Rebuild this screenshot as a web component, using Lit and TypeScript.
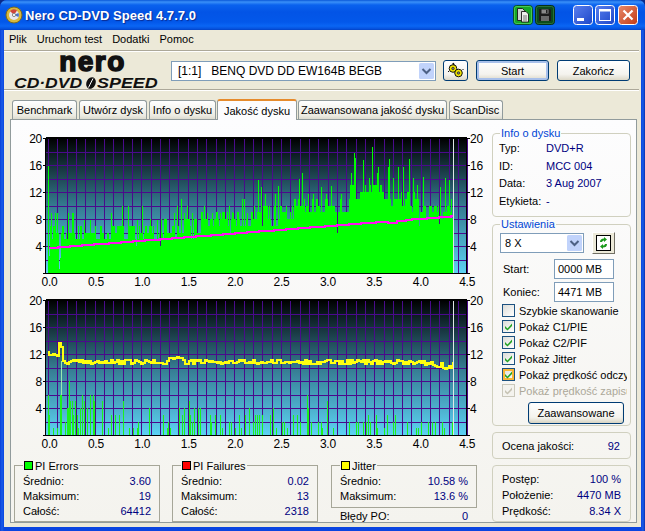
import { LitElement, html, css, svg } from "lit";
import { customElement, property } from "lit/decorators.js";

function rng(seed: number) {
  let s = seed;
  return () => {
    s = (s * 1664525 + 1013904223) % 4294967296;
    return s / 4294967296;
  };
}

const PL = 37, PW = 420, PT = 10, PB = 145;
const U = 6.75;
const yOf = (v: number) => PB - v * U;

const PEAKS_A: [number, number][] = [
  [115,124],[118,183],[122,264],[135,264],[142,264],[160,305],[175,264],[185,264],[190,264],[205,305],[222,283],[240,283],
  [303,262],[312,305],[336,243],[355,243],[380,283],[396,243],[420,305],[440,283],[462,283],[492,262],[502,243],[512,222],
  [522,262],[532,243],[545,262],[583,243],[592,264],[605,264],[630,264],[658,243],[670,264],[695,222],[703,222],[712,262],
];
const PEAKS_B: [number, number][] = [
  [25,165],[33,185],[45,205],[75,205],[85,182],[148,162],[155,145],[175,205],[190,205],[213,185],[228,205],[243,182],
  [272,205],[303,145],[313,85],[315,100],[340,105],[358,160],[367,65],[380,145],[385,125],[413,125],[416,103],[428,160],
  [445,125],[459,125],[478,103],[490,160],[500,180],[520,155],[570,185],[585,160],[597,165],
];

function piePath() {
  const r = rng(7);
  const heights: number[] = [];
  const end = 442;
  let cur = 6;
  for (let x = 37; x <= end; x++) {
    const zr = (x - 239) * 3;
    let b: number;
    if (x < 130) b = 6;
    else if (x < 190) b = 6.8;
    else if (x < 239) b = 8;
    else if (zr < 130) b = 9;
    else if (zr < 280) b = 10;
    else if (zr < 300) b = 11.5;
    else if (zr < 420) b = 12.4;
    else if (zr < 500) b = 11;
    else b = 9.6;
    if (r() < 0.55) cur = Math.round(b + (r() - 0.55) * 3);
    heights.push(cur);
  }
  const set = (x: number, v: number) => {
    const i = Math.round(x) - 37;
    if (i >= 0 && i < heights.length) heights[i] = Math.max(heights[i], v);
  };
  for (const [zx, zy] of PEAKS_A) set(zx / 3 - 1, (443 - zy) / 20.2);
  for (const [zx, zy] of PEAKS_B) set(zx / 3 + 239, (443 - zy) / 20.2);
  const dips: [number, number][] = [[48, 0.6], [49, 2.2], [38, 2.6], [149, 4], [326, 6], [408, 7], [428, 7.2]];
  for (const [x, v] of dips) heights[x - 37] = v;
  return heights.map((v, i) => `M${37 + i + 0.5} ${PB}V${yOf(v).toFixed(1)}`).join("");
}

function pinkLine() {
  const r = rng(21);
  let d = "";
  let last = 0;
  for (let x = 38; x <= 441; x += 3) {
    const t = (x - 38) / 403;
    let v = 3.7 + t * 4.7;
    if (x > 375 && x < 395) v += (r() - 0.5) * 0.9;
    const y = Math.round(yOf(v));
    d += d ? `H${x}V${y}` : `M${x} ${y}`;
    last = y;
  }
  return d + `H442V${last}`;
}

const BARS_A: [number, number][] = [
  [115,6],[118,3],[130,1],[140,1],[150,6],[153,6],[165,2],[170,4],[173,4],[178,8],[180,5],[185,5],[188,3],[195,5],[200,3],[205,1],
  [210,4],[215,6],[222,5],[232,4],[240,6],[248,6],[252,5],[277,5],[293,1],[302,3],[316,3],[327,3],[338,5],[340,5],[356,1],[370,1],
  [380,1],[385,2],[418,4],[460,3],[470,1],[474,2],[480,1],[506,4],[515,3],[523,4],[538,5],[540,3],[545,2],[553,4],[563,4],[571,4],
  [600,3],[604,2],[615,3],[630,3],[637,1],[656,2],[664,2],[676,1],[688,3],[692,1],[704,3],[716,4],
];
const BARS_B: [number, number][] = [
  [8,2],[15,3],[22,3],[26,3],[37,3],[60,3],[70,4],[77,1],[97,2],[103,2],[110,1],[130,3],[140,3],[150,2],[172,6],[175,4],[182,2],
  [203,2],[212,2],[215,1],[230,5],[232,3],[250,1],[298,2],[318,2],[323,2],[340,2],[347,2],[355,3],[360,2],[378,3],[382,1],[402,1],
  [410,3],[428,2],[436,3],[472,2],[497,1],[505,1],[513,2],[535,2],[547,2],[555,2],[577,2],[583,1],[605,2],
];

function pifPath() {
  let d = "";
  for (const [zx, v] of BARS_A) d += `M${Math.round(zx / 3 - 1) + 0.5} ${PB}V${yOf(v)}`;
  for (const [zx, v] of BARS_B) d += `M${Math.round(zx / 3 + 239) + 0.5} ${PB}V${yOf(v)}`;
  return d;
}

function jitterPath() {
  const r = rng(99);
  let d = `M37 ${Math.round(yOf(12.3))}`;
  for (let x = 38; x <= 442; x += 2) {
    const u = x - 37;
    let v = 10.8 + (r() - 0.5) * 0.7;
    if (u < 8) v = 12 + (r() - 0.5) * 0.5;
    else if (u < 11) v = 11.7;
    else if (u < 13) v = 13.7;
    else if (u < 15) v = 13;
    else if (u < 17) v = 11;
    else if (u > 120 && u < 135) v += 0.6;
    else if (u > 375) v = 10.3 + (r() - 0.5) * 1.0;
    d += `H${x}V${Math.round(yOf(v))}`;
  }
  return d;
}

@customElement("nero-chart")
class NeroChart extends LitElement {
  @property() mode = "pie";
  static styles = css`
    :host { display: block; width: 478px; height: 162px; }
    svg { display: block; }
    text { font: 12px "Liberation Sans", Arial, sans-serif; fill: #000; letter-spacing: -0.25px; }
    .c { text-anchor: middle; }
    .e { text-anchor: end; }
    .grid { stroke: #4a0a8c; stroke-width: 1; shape-rendering: crispEdges; fill: none; }
    .frame { stroke: #000; stroke-width: 1; shape-rendering: crispEdges; fill: none; }
    .top { stroke: #000; stroke-width: 2; shape-rendering: crispEdges; }
    .green { stroke: #00ff00; stroke-width: 1; fill: none; shape-rendering: crispEdges; }
    .pif { stroke: #1cf01c; stroke-width: 1.4; fill: none; shape-rendering: crispEdges; }
    .pale { stroke: #9ae8b0; stroke-width: 1; shape-rendering: crispEdges; }
    .pink { stroke: #ff10f0; stroke-width: 2; fill: none; shape-rendering: crispEdges; }
    .yellow { stroke: #ffff10; stroke-width: 2; fill: none; shape-rendering: crispEdges; }
    .mark { stroke: #dfe6e6; stroke-width: 1; shape-rendering: crispEdges; }
  `;
  render() {
    const ys = [0, 2, 4, 6, 8, 10, 12, 14, 16, 18, 20];
    const xs = Array.from({ length: 46 }, (_, k) => k);
    const labels = [20, 16, 12, 8, 4];
    const xl = ["0.0", "0.5", "1.0", "1.5", "2.0", "2.5", "3.0", "3.5", "4.0", "4.5"];
    const pie = this.mode === "pie";
    return html`<svg width="478" height="162" viewBox="0 0 478 162">
      <defs>
        <linearGradient id="bg" x1="0" y1="0" x2="0" y2="1">
          <stop offset="0" stop-color="#000000"></stop>
          <stop offset="0.5" stop-color="#357a90"></stop>
          <stop offset="1" stop-color="#5cd2f4"></stop>
        </linearGradient>
      </defs>
      <rect x=${PL - 2} y=${PT} width=${PW} height=${PB - PT} fill="url(#bg)"></rect>
      ${ys.map((v) => svg`<path class="grid" d="M${PL - 2} ${Math.round(yOf(v)) + 0.5}H${PL - 2 + PW}"></path>`)}
      ${xs.map((k) => svg`<path class="grid" d="M${Math.round(PL + k * 9.32) + 0.5} ${PT}V${PB}"></path>`)}
      ${pie
        ? svg`<path class="green" d=${piePath()}></path><path class="pink" d=${pinkLine()}></path>`
        : svg`<path class="pale" d="M50.5 ${PB}V${yOf(11)}"></path><path class="pif" d=${pifPath()}></path><path class="yellow" d=${jitterPath()}></path>`}
      <path class="mark" d="M442.5 ${PT}V${PB}"></path>
      <path class="top" d="M${PL - 2} ${PT}H${PL - 2 + PW + 1}"></path>
      <path class="frame" d="M${PL - 2.5} ${PT}V${PB + 0.5}H${PL - 2 + PW}V${PT}"></path>
      ${ys.filter((v) => v % 4 === 0).map((v) => svg`<path class="frame" d="M${PL - 5} ${Math.round(yOf(v)) + 0.5}H${PL - 2}M${PL - 2 + PW} ${Math.round(yOf(v)) + 0.5}h4"></path>`)}
      ${labels.map((v) => svg`<text class="e" x="31" y=${yOf(v) + 4.5}>${v}</text>`)}
      ${labels.map((v) => svg`<text x="459" y=${yOf(v) + 4.5}>${v}</text>`)}
      ${xl.map((t, i) => svg`<text class="c" x=${38.5 + i * 46.4} y="158">${t}</text>`)}
    </svg>`;
  }
}

@customElement("stat-box")
class StatBox extends LitElement {
  @property() label = "";
  @property() tone = "green";
  @property({ type: Array }) rows: [string, string][] = [];
  @property({ type: Boolean }) short = false;
  static styles = css`
    :host { display: block; width: 146px; }
    fieldset {
      margin: 0; padding: 2px 8px 0 8px; min-width: 0; box-sizing: border-box;
      border: 1px solid #a6a698; height: 63px;
      display: flex; flex-direction: column;
    }
    :host([short]) fieldset { height: 49px; }
    legend { display: flex; align-items: center; gap: 2px; padding: 0 1px; margin-left: 0; height: 13px; font-size: 11px; color: #000; }
    .sw { width: 7px; height: 7px; border: 1px solid #000; }
    .green { background: #00ff00; }
    .red { background: #ff0000; }
    .yellow { background: #ffff00; }
    .row { display: flex; justify-content: space-between; height: 15px; line-height: 15px; font-size: 11px; }
    .v { color: #000080; }
  `;
  render() {
    return html`<fieldset>
      <legend><span class="sw ${this.tone}"></span>${this.label}</legend>
      ${this.rows.map((r) => html`<div class="row"><span>${r[0]}</span><span class="v">${r[1]}</span></div>`)}
    </fieldset>`;
  }
}

@customElement("app-root")
class AppRoot extends LitElement {
  static styles = css`
    :host { display: block; width: 645px; height: 531px; background: #0a2a8a; font: 11px "Liberation Sans", Arial, sans-serif; color: #000; overflow: hidden; }
    .window { height: 531px; display: flex; flex-direction: column; box-sizing: border-box; border-radius: 7px 7px 0 0; overflow: hidden;
      background: linear-gradient(90deg, #0a3fd8 0, #1a5ce8 2px, #0a45e0 4px, #0a45e0 641px, #1a5ce8 643px, #0a2fb0 645px); }
    .title { height: 30px; flex: none; display: flex; align-items: center; padding: 0 7px 0 5px;
      background: linear-gradient(180deg, #0a58d8 0, #3a90f8 2px, #0a62ee 5px, #0354e6 12px, #0358ea 22px, #0a66f4 26px, #0550dc 29px, #0340c0 30px); }
    .app-ic { width: 18px; height: 18px; flex: none; margin-right: 2px; }
    .title-text { font: bold 13px "Liberation Sans", Arial, sans-serif; letter-spacing: 0.05px; color: #fff; text-shadow: 1px 1px 1px #0a2a90; flex: 1; white-space: nowrap; }
    .tb { width: 20px; height: 20px; flex: none; display: block; }
    .ml2 { margin-left: 2px; }
    .ml3 { margin-left: 3px; }
    .tb-gap { width: 18px; flex: none; }
    .body { flex: 1; margin: 0 4px 4px; background: #ece9d8; display: flex; flex-direction: column; min-height: 0; }
    .menu { height: 18px; padding-bottom: 2px; flex: none; display: flex; align-items: center; padding-left: 5px; gap: 10px; }
    .rule { height: 2px; flex: none; margin: 0 2px 0 0; background: linear-gradient(180deg, #aca899 50%, #ffffff 50%); }
    .head { height: 37px; flex: none; display: flex; align-items: center; padding-left: 10px; }
    .logo { width: 157px; height: 37px; flex: none; display: flex; flex-direction: column; align-items: center; line-height: 1; }
    .nero { font: bold 28px/16px "Liberation Sans", Arial, sans-serif; -webkit-text-stroke: 1.6px #111; letter-spacing: 1.5px; color: #111; height: 24px; padding-top: 2px; box-sizing: border-box; }
    .speed { display: flex; align-items: center; align-self: flex-start; font: italic bold 14px/12px "Liberation Sans", Arial, sans-serif; color: #111; white-space: nowrap; margin-top: 1px; }
    .speed span { display: inline-block; transform-origin: left center; }
    .speed .a { width: 71px; transform: scaleX(1.25); }
    .speed .b { width: 61px; transform: scaleX(1.28); }
    .disc { width: 12px; height: 12px; flex: none; }
    .combo { box-sizing: border-box; border: 1px solid #7f9db9; background: #fff; display: flex; align-items: center; justify-content: space-between; padding-left: 5px; white-space: nowrap; }
    .drive { width: 265px; height: 20px; margin: 0 7px 0 0; padding-left: 6px; font-size: 12px; }
    .drive b { font-weight: normal; margin-right: 10px; }
    .arrow { width: 15px; height: 16px; margin-right: 1px; flex: none; display: block; }
    .xpbtn { box-sizing: border-box; border: 1px solid #003c74; border-radius: 3px; background: linear-gradient(180deg, #ffffff 0, #f4f3ee 70%, #dcd8c8 100%); display: flex; align-items: center; justify-content: center; font: inherit; padding: 0; color: #000; }
    .key { width: 25px; height: 21px; margin-right: 8px; }
    .start { width: 73px; height: 21px; margin-right: 8px; box-shadow: inset 0 0 0 2px #a8c0ea; }
    .stop { width: 73px; height: 21px; }
    .tabs { flex: none; height: 19px; margin-top: 9px; display: flex; align-items: flex-end; padding-left: 8px; gap: 2px; position: relative; z-index: 1; }
    .tab { box-sizing: border-box; height: 19px; border: 1px solid #919b9c; border-bottom: none; border-radius: 3px 3px 0 0; background: linear-gradient(180deg, #fff, #ecebe2 80%, #dcdbcf); display: flex; align-items: center; justify-content: center; white-space: nowrap; }
    .tab.on { height: 21px; background: #fcfcfe; border-top: 2px solid #e68b2c; margin-bottom: -1px; }
    .t1 { width: 65px; } .t2 { width: 68px; } .t3 { width: 67px; } .t4 { width: 80px; margin-left: -1px; } .t5 { width: 149px; margin-left: -1px; } .t6 { width: 54px; }
    .panel { flex: none; height: 404px; margin: 0 4px 0 6px; box-sizing: border-box; border: 1px solid #919b9c; background: linear-gradient(180deg, #fdfdfe 0, #f4f3ee 100%); display: flex; }
    .left { width: 480px; flex: none; padding-top: 8px; box-sizing: border-box; }
    .stats { display: flex; margin: 7px 0 0 3px; gap: 12px; }
    .jit { width: 146px; margin-left: 1px; }
    .po { display: flex; justify-content: space-between; height: 15px; line-height: 15px; margin: 1px 9px 0 9px; }
    .v { color: #000080; }
    .right { width: 139px; flex: none; margin-left: 1px; display: flex; flex-direction: column; }
    fieldset.g { margin: 0; padding: 0 7px; min-width: 0; border: 1px solid #d0d0bf; border-radius: 4px; box-sizing: border-box; }
    fieldset.g legend { padding: 0 1px; margin-left: 0; color: #0046d5; height: 13px; line-height: 13px; }
    fieldset.info { height: 90px; margin-top: 7px; }
    .ir { display: flex; height: 17.7px; line-height: 17.7px; margin-left: -1px; }
    .ir span:first-child { width: 47px; flex: none; }
    fieldset.set { height: 209px; margin-top: 1px; padding-top: 1px; }
    .sr { display: flex; align-items: center; gap: 8px; }
    .speed-combo { width: 84px; height: 20px; padding-left: 4px; }
    .refresh { width: 23px; height: 22px; background: #ece9d8; border: 1px solid; border-color: #fff #716f64 #716f64 #fff; box-sizing: border-box; display: flex; align-items: center; justify-content: center; }
    .fr { display: flex; align-items: center; justify-content: space-between; height: 20px; margin: 0 9px 0 3px; }
    .fr.f1 { margin-top: 5px; }
    .fr.f2 { margin-top: 3px; margin-bottom: 1px; }
    .inp { box-sizing: border-box; width: 60px; height: 20px; border: 1px solid #7f9db9; background: #fff; padding-left: 3px; line-height: 18px; }
    .cb { display: flex; align-items: center; gap: 4px; height: 16px; white-space: nowrap; overflow: hidden; width: 125px; margin-left: 2px; }
    .box { width: 11px; height: 11px; flex: none; border: 1px solid #1c5180; background: linear-gradient(135deg, #dcdcd7, #fff); display: flex; align-items: center; justify-content: center; }
    .box svg { display: block; }
    .box.hot { box-shadow: inset 0 0 0 2px #f8b636; }
    .box.off { border-color: #cac8bb; background: #f4f3ee; }
    .dis { color: #aca899; }
    .adv { width: 96px; height: 22px; margin: 3px 0 0 28px; box-shadow: inset 0 -1px 2px #d8d4c4; }
    .rate { height: 27px; margin-top: 6px; display: flex; align-items: center; justify-content: space-between; padding: 0 10px 0 9px; border: 1px solid #d0d0bf; border-radius: 4px; box-sizing: border-box; }
    .prog { height: 57px; margin-top: 6px; padding: 5px 9px 0 9px; border: 1px solid #d0d0bf; border-radius: 4px; box-sizing: border-box; }
    .pr { display: flex; justify-content: space-between; height: 16px; line-height: 16px; }
  `;
  check(state: string) {
    const col = state === "off" ? "#c5c2b2" : "#21a121";
    return html`<svg width="9" height="9" viewBox="0 0 9 9"><path d="M1 4l2.5 2.5L8 1.500v2.400L3.500 8.600 1 6.200z" fill=${col}></path></svg>`;
  }
  render() {
    const arrow = html`<svg class="arrow" viewBox="0 0 15 16"><rect width="15" height="16" rx="1.500" fill="#c1d3fb"></rect><path d="M3.500 6l4 4 4-4" fill="none" stroke="#4d6185" stroke-width="2"></path></svg>`;
    return html`<div class="window">
      <div class="title">
        <svg class="app-ic" viewBox="0 0 18 18"><circle cx="9" cy="9" r="8" fill="#d8b83c" stroke="#7a6a20"></circle><circle cx="9" cy="9" r="5" fill="#e8e8f0"></circle><path d="M9 9L5 5a5.600 5.600 0 0 1 7-.6z" fill="#d0443c"></path><path d="M9 9l4.500-2a5 5 0 0 1 0 4z" fill="#4a70c8"></path><circle cx="9" cy="9" r="1.600" fill="#fff" stroke="#888"></circle></svg>
        <span class="title-text">Nero CD-DVD Speed 4.7.7.0</span>
        <svg class="tb" viewBox="0 0 20 20"><rect x=".5" y=".5" width="19" height="19" rx="3" fill="#16a626" stroke="#0a4f2a"></rect><rect x="1.500" y="1.500" width="17" height="17" rx="2" fill="none" stroke="#5cd868" stroke-opacity=".7"></rect><path d="M4.500 3.500h5l2 2v10h-7z" fill="#d0d4d0" stroke="#1a1a1a" stroke-width=".9"></path><path d="M8.500 6.500h4.500l2.500 2.500v8h-7z" fill="#eef0ec" stroke="#1a1a1a" stroke-width=".9"></path><path d="M10 11h4M10 13h4M10 15h4" stroke="#555" stroke-width=".8"></path></svg>
        <svg class="tb ml2" viewBox="0 0 20 20"><rect x=".5" y=".5" width="19" height="19" rx="3" fill="#0c4a1c" stroke="#05301a"></rect><rect x="1.500" y="1.500" width="17" height="17" rx="2" fill="none" stroke="#2f7a3e" stroke-opacity=".8"></rect><path d="M4 4h11l1 1v11H4z" fill="#1c1c1c"></path><path d="M6.500 4.500h7v4h-7z" fill="#8a8a8a"></path><path d="M6 11h8v5H6z" fill="#6a6a6a"></path><path d="M11 5h1.500v3H11z" fill="#222"></path></svg>
        <span class="tb-gap"></span>
        <svg class="tb" viewBox="0 0 20 20"><defs><linearGradient id="bl" x1="0" y1="0" x2="1" y2="1"><stop offset="0" stop-color="#5a80ee"></stop><stop offset="1" stop-color="#1c46c8"></stop></linearGradient></defs><rect x=".5" y=".5" width="19" height="19" rx="3" fill="url(#bl)" stroke="#fff"></rect><rect x="4" y="13" width="7" height="3" fill="#fff"></rect></svg>
        <svg class="tb ml2" viewBox="0 0 20 20"><rect x=".5" y=".5" width="19" height="19" rx="3" fill="url(#bl)" stroke="#fff"></rect><rect x="4.500" y="5.500" width="11" height="10" fill="none" stroke="#fff"></rect><rect x="4" y="4" width="12" height="2.500" fill="#fff"></rect></svg>
        <svg class="tb ml3" viewBox="0 0 20 20"><defs><linearGradient id="rd" x1="0" y1="0" x2="1" y2="1"><stop offset="0" stop-color="#e88a6a"></stop><stop offset="1" stop-color="#c23a16"></stop></linearGradient></defs><rect x=".5" y=".5" width="19" height="19" rx="3" fill="url(#rd)" stroke="#fff"></rect><path d="M5.500 5.500l9 9M14.500 5.500l-9 9" stroke="#fff" stroke-width="2.200"></path></svg>
      </div>
      <div class="body">
        <div class="menu"><span>Plik</span><span>Uruchom test</span><span>Dodatki</span><span>Pomoc</span></div>
        <div class="rule"></div>
        <div class="head">
          <div class="logo">
            <div class="nero">nero</div>
            <div class="speed"><span class="a">CD·DVD</span><svg class="disc" viewBox="0 0 12 12"><ellipse cx="6" cy="6" rx="4.500" ry="6" transform="rotate(25 6 6)" fill="#111"></ellipse><path d="M8 1.500L3.500 10.500" stroke="#fff" stroke-width="1"></path></svg><span class="b">SPEED</span></div>
          </div>
          <div class="combo drive"><span><b>[1:1]</b>BENQ DVD DD EW164B BEGB</span>${arrow}</div>
          <button class="xpbtn key"><svg width="19" height="17" viewBox="0 0 19 17"><path d="M7 1l1 2.200" stroke="#111" stroke-width="1.600"></path><circle cx="7" cy="6.500" r="3.800" fill="#f5e800" stroke="#111"></circle><circle cx="7" cy="6.500" r="1.300" fill="#777" stroke="#111" stroke-width=".6"></circle><circle cx="12.500" cy="11" r="3.800" fill="#f5e800" stroke="#111"></circle><circle cx="12.500" cy="11" r="1.300" fill="#777" stroke="#111" stroke-width=".6"></circle><path d="M3 9l-1 1M16.500 8l1-1" stroke="#111"></path></svg></button>
          <button class="xpbtn start">Start</button>
          <button class="xpbtn stop">Zakończ</button>
        </div>
        <div class="rule"></div>
        <div class="tabs">
          <div class="tab t1">Benchmark</div><div class="tab t2">Utwórz dysk</div><div class="tab t3">Info o dysku</div><div class="tab on t4">Jakość dysku</div><div class="tab t5">Zaawansowana jakość dysku</div><div class="tab t6">ScanDisc</div>
        </div>
        <div class="panel">
          <div class="left">
            <nero-chart mode="pie"></nero-chart>
            <nero-chart mode="pif"></nero-chart>
            <div class="stats">
              <stat-box label="PI Errors" tone="green" .rows=${[["Średnio:", "3.60"], ["Maksimum:", "19"], ["Całość:", "64412"]]}></stat-box>
              <stat-box label="PI Failures" tone="red" .rows=${[["Średnio:", "0.02"], ["Maksimum:", "13"], ["Całość:", "2318"]]}></stat-box>
              <div class="jit">
                <stat-box short label="Jitter" tone="yellow" .rows=${[["Średnio:", "10.58 %"], ["Maksimum:", "13.6 %"]]}></stat-box>
                <div class="po"><span>Błędy PO:</span><span class="v">0</span></div>
              </div>
            </div>
          </div>
          <div class="right">
            <fieldset class="g info">
              <legend>Info o dysku</legend>
              <div class="ir"><span>Typ:</span><span class="v">DVD+R</span></div>
              <div class="ir"><span>ID:</span><span class="v">MCC 004</span></div>
              <div class="ir"><span>Data:</span><span class="v">3 Aug 2007</span></div>
              <div class="ir"><span>Etykieta:</span><span class="v">-</span></div>
            </fieldset>
            <fieldset class="g set">
              <legend>Ustawienia</legend>
              <div class="sr"><div class="combo speed-combo"><span>8 X</span>${arrow}</div>
                <div class="refresh"><svg width="15" height="16" viewBox="0 0 15 16"><rect x=".5" y=".5" width="14" height="15" fill="#fff" stroke="#000"></rect><path d="M4 7a4 3.500 0 0 1 4-3.500V2l3 2.500L8 7V5.500A2 2 0 0 0 6 7z" fill="#1a9a1a"></path><path d="M11 9a4 3.500 0 0 1-4 3.500V14l-3-2.500L7 9v1.500A2 2 0 0 0 9 9z" fill="#1a9a1a"></path></svg></div>
              </div>
              <div class="fr f1"><span>Start:</span><div class="inp">0000 MB</div></div>
              <div class="fr f2"><span>Koniec:</span><div class="inp">4471 MB</div></div>
              <div class="cb"><span class="box"></span>Szybkie skanowanie</div>
              <div class="cb"><span class="box">${this.check("on")}</span>Pokaż C1/PIE</div>
              <div class="cb"><span class="box">${this.check("on")}</span>Pokaż C2/PIF</div>
              <div class="cb"><span class="box">${this.check("on")}</span>Pokaż Jitter</div>
              <div class="cb"><span class="box hot">${this.check("on")}</span>Pokaż prędkość odczytu</div>
              <div class="cb dis"><span class="box off">${this.check("off")}</span>Pokaż prędkość zapisu</div>
              <button class="xpbtn adv">Zaawansowane</button>
            </fieldset>
            <div class="rate"><span>Ocena jakości:</span><span class="v">92</span></div>
            <div class="prog">
              <div class="pr"><span>Postęp:</span><span class="v">100 %</span></div>
              <div class="pr"><span>Położenie:</span><span class="v">4470 MB</span></div>
              <div class="pr"><span>Prędkość:</span><span class="v">8.34 X</span></div>
            </div>
          </div>
        </div>
      </div>
    </div>`;
  }
}
